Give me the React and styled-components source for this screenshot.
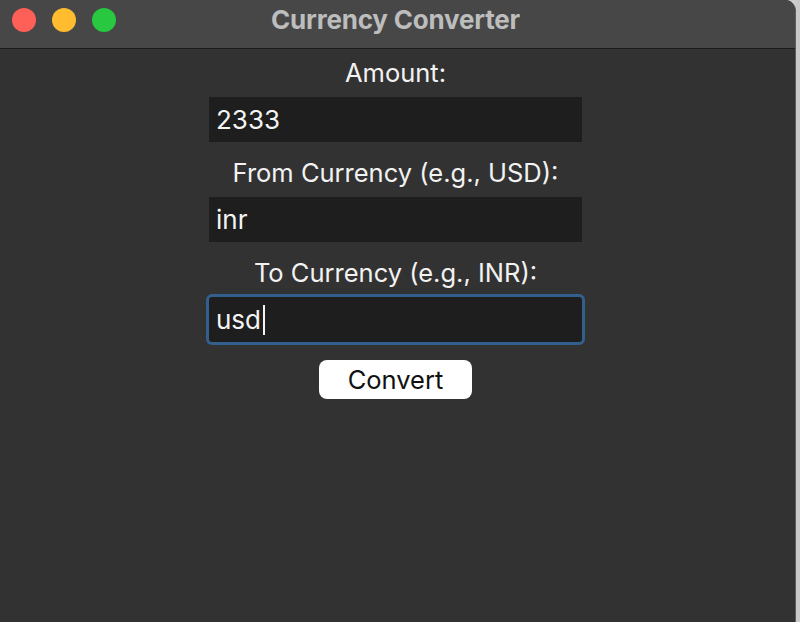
import React from 'react'
import styled, { createGlobalStyle } from 'styled-components'

const GlobalStyle = createGlobalStyle`
  html, body {
    margin: 0;
    padding: 0;
    background: #cdcdcd;
  }
  body {
    font-family: Inter, "Liberation Sans", Arial, sans-serif;
  }
`

export default function App() {
  return (
    <Screen>
      <GlobalStyle />
      <Window>
        <TitleBar>
          <Lights>
            <Light color="#fe5f57" />
            <Light color="#febc2e" />
            <Light color="#28c840" />
          </Lights>
          <Title>Currency Converter</Title>
        </TitleBar>
        <Body>
          <Label>Amount:</Label>
          <Field defaultValue="2333" />
          <Label>From Currency (e.g., USD):</Label>
          <Field defaultValue="inr" />
          <Label>To Currency (e.g., INR):</Label>
          <Field defaultValue="usd" focused>
            <Caret />
          </Field>
          <Button>Convert</Button>
        </Body>
      </Window>
      <Edge />
    </Screen>
  )
}

function Field({ defaultValue, focused, children }) {
  return (
    <InputBox $focused={focused}>
      <Text>{defaultValue}</Text>
      {children}
    </InputBox>
  )
}

const Screen = styled.div`
  display: flex;
  width: 800px;
  height: 622px;
  overflow: hidden;
`

const Window = styled.div`
  width: 795px;
  height: 622px;
  display: flex;
  flex-direction: column;
  background: #323232;
  border-top-right-radius: 11px;
  overflow: hidden;
  border-right: 1px solid #5c5c5c;
`

const Edge = styled.div`
  flex: 1;
  background: #c9c9c9;
`

const TitleBar = styled.div`
  height: 48px;
  flex-shrink: 0;
  display: flex;
  align-items: center;
  justify-content: center;
  position: relative;
  background: #474747;
  border-bottom: 1px solid #1b1b1b;
`

const Lights = styled.div`
  position: absolute;
  left: 12px;
  top: 8px;
  display: flex;
  gap: 16px;
`

const Light = styled.span`
  width: 24px;
  height: 24px;
  border-radius: 50%;
  background: ${p => p.color};
`

const Title = styled.div`
  color: #bdbdbd;
  font-size: 26px;
  font-weight: bold;
  letter-spacing: -0.2px;
  margin-top: -10px;
  margin-right: 4px;
`

const Body = styled.div`
  display: flex;
  flex-direction: column;
  align-items: center;
  padding-top: 9px;
  padding-right: 4px;
`

const Label = styled.div`
  color: #f2f2f2;
  font-size: 25.5px;
  line-height: 30px;
  height: 30px;
  margin-bottom: 9px;
`

const InputBox = styled.div`
  width: 373px;
  height: 45px;
  box-sizing: border-box;
  background: #1e1e1e;
  display: flex;
  align-items: center;
  padding-left: 7px;
  margin-bottom: 16px;
  border-radius: ${p => (p.$focused ? '3px' : '0')};
  box-shadow: ${p => (p.$focused ? '0 0 0 3px #335f8d' : 'none')};
`

const Text = styled.span`
  color: #f4f4f4;
  font-size: 26px;
`

const Caret = styled.span`
  width: 1.5px;
  height: 30px;
  background: #f4f4f4;
  margin-left: 2px;
`

const Button = styled.div`
  width: 153px;
  height: 39px;
  margin-top: 2px;
  border-radius: 8px;
  background: #ffffff;
  color: #111;
  font-size: 25.5px;
  display: flex;
  align-items: center;
  justify-content: center;
`
